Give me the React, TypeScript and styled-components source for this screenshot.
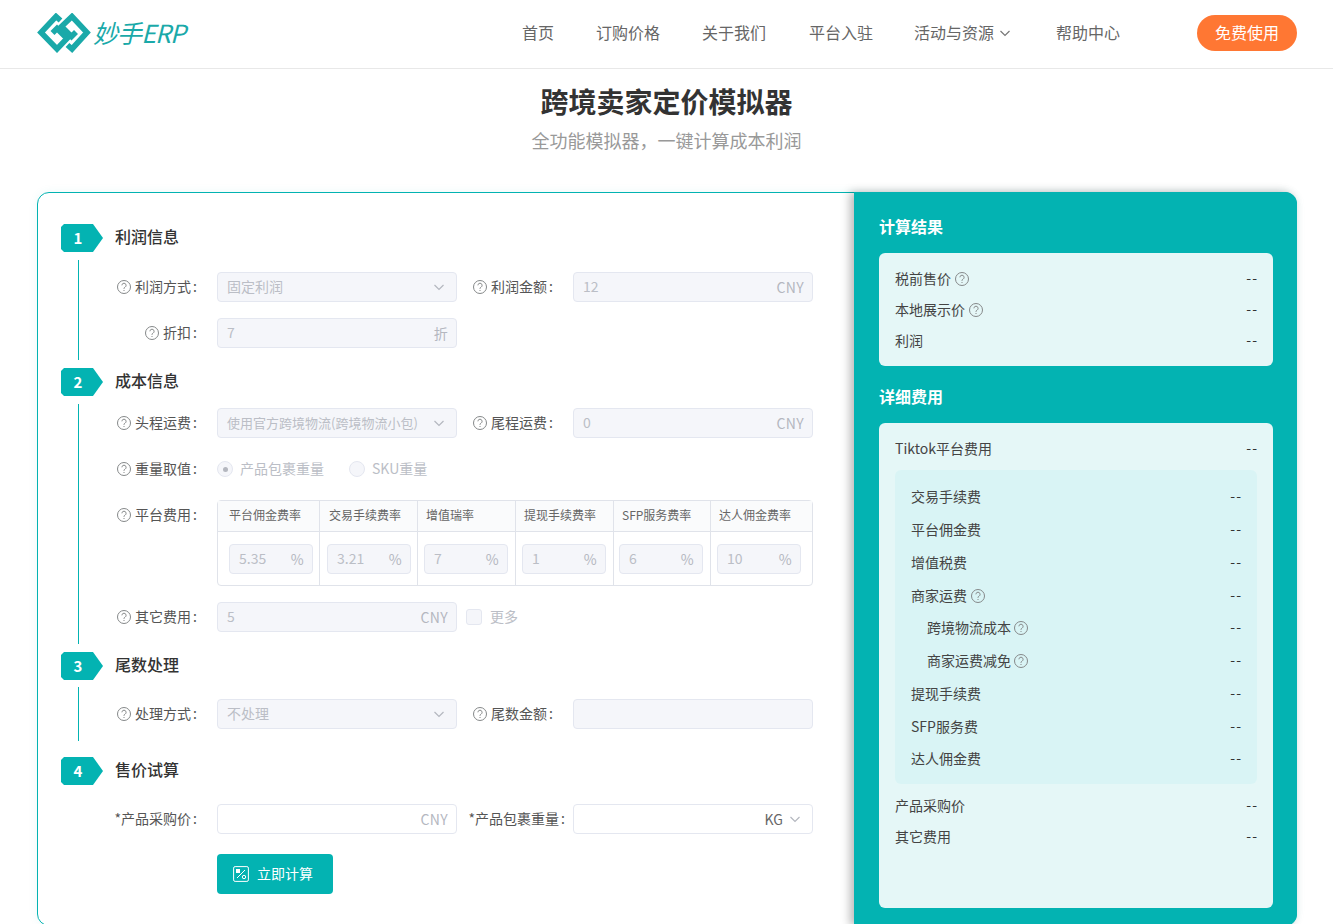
import React from "react";
import styled, { createGlobalStyle } from "styled-components";

const TEAL = "#03b3b2";
const FONT = `"Noto Sans CJK SC", "Noto Sans", sans-serif`;

const Global = createGlobalStyle`
  html, body { margin: 0; padding: 0; background: #fff; overflow: hidden; height: 924px; }
  body { font-family: ${FONT}; font-size: 14px; color: #333; }
  * { box-sizing: border-box; }
`;

const Txt = styled.span`
  display: block;
  padding-bottom: 2px;
`;

const Header = styled.header`
  height: 69px;
  border-bottom: 1px solid #e8e8e8;
  display: flex;
  align-items: center;
  padding: 0 36px 3px 37px;
`;
const LogoWrap = styled.div`
  display: flex;
  align-items: center;
  gap: 2px;
`;
const LogoText = styled.span`
  font-size: 25px;
  font-style: italic;
  font-weight: 400;
  letter-spacing: -0.9px;
  line-height: 38px;
  padding-bottom: 2px;
  color: #1aa9a9;
`;
const Nav = styled.nav`
  margin-left: auto;
  display: flex;
  align-items: center;
`;
const NavItem = styled.a<{ $w: number }>`
  width: ${(p) => p.$w}px;
  display: flex;
  align-items: center;
  gap: 5px;
  font-size: 16px;
  color: #666;
  white-space: nowrap;
`;
const FreeButton = styled.button`
  width: 100px;
  height: 36px;
  border: 0;
  border-radius: 18px;
  background: #ff7733;
  color: #fff;
  font-family: ${FONT};
  font-size: 16px;
  padding: 0 0 2px;
`;

const Hero = styled.div`
  text-align: center;
  height: 123px;
  padding-top: 11px;
`;
const Title = styled.h1`
  margin: 0;
  font-size: 28px;
  line-height: 42px;
  font-weight: 700;
  color: #333;
`;
const Subtitle = styled.p`
  margin: 5px 0 0;
  font-size: 18px;
  line-height: 27px;
  color: #999;
`;

const Board = styled.div`
  margin-left: 37px;
  width: 1260px;
  height: 734px;
  border: 1px solid ${TEAL};
  border-radius: 12px;
  display: flex;
  box-shadow: 0 0 10px rgba(3, 179, 178, 0.08);
`;
const FormPanel = styled.div`
  width: 816px;
  flex: none;
  padding: 31px 0 0 23px;
`;
const ResultPanel = styled.aside`
  flex: 1;
  margin: -1px -1px -1px 0;
  background: ${TEAL};
  border-radius: 0 12px 12px 0;
  padding: 21px 24px 0 25px;
  box-shadow: -4px 0 10px rgba(0, 0, 0, 0.28);
`;

const SectionHead = styled.div`
  display: flex;
  align-items: center;
  height: 28px;
  gap: 12px;
`;
const Badge = styled.div`
  width: 42px;
  height: 28px;
  background: ${TEAL};
  color: #fff;
  font-size: 15px;
  font-weight: 700;
  display: flex;
  align-items: center;
  justify-content: center;
  padding: 0 8px 1px 0;
  clip-path: polygon(3px 0, 32px 0, 42px 14px, 32px 28px, 3px 28px, 0 25px, 0 3px);
`;
const SectionTitle = styled.h2`
  margin: 0;
  padding-bottom: 4px;
  font-size: 16px;
  font-weight: 500;
  color: #333;
`;
const SectionBody = styled.div<{ $line?: boolean; $top: number; $pt: number; $after: number; $pb: number; $gap?: number }>`
  margin: ${(p) => p.$top}px 0 ${(p) => p.$after}px 17px;
  padding: ${(p) => p.$pt}px 0 ${(p) => p.$pb}px 0;
  border-left: 1px solid ${(p) => (p.$line ? TEAL : "transparent")};
  display: flex;
  flex-direction: column;
  gap: ${(p) => p.$gap ?? 16}px;
`;
const Row = styled.div`
  display: flex;
  align-items: flex-start;
`;
const Label = styled.div<{ $w: number; $pr?: number; $ml?: number; $mr: number }>`
  width: ${(p) => p.$w}px;
  margin-left: ${(p) => p.$ml ?? 0}px;
  margin-right: ${(p) => p.$mr}px;
  padding-right: ${(p) => p.$pr ?? 0}px;
  height: 30px;
  flex: none;
  display: flex;
  align-items: center;
  justify-content: flex-end;
  gap: 4px;
  color: #555;
  font-size: 14px;
  white-space: nowrap;
`;
const Colon = styled.span`
  margin-left: 2px;
`;
const Box = styled.div<{ $off?: boolean; $w?: number; $sm?: boolean }>`
  width: ${(p) => p.$w ?? 240}px;
  height: 30px;
  flex: none;
  border: 1px solid #e4e7f0;
  border-radius: 4px;
  background: ${(p) => (p.$off ? "#f5f6fa" : "#fff")};
  display: flex;
  align-items: center;
  justify-content: space-between;
  padding: 0 8px 0 9px;
  font-size: ${(p) => (p.$sm ? 13 : 14)}px;
  color: #bbbec6;
  white-space: nowrap;
`;
const Suffix = styled.span`
  display: block;
  color: #b4b7bf;
  letter-spacing: 0.3px;
`;
const SelectTail = styled.span`
  display: flex;
  align-items: center;
  gap: 6px;
  margin-right: 3px;
  color: #666;
`;
const Chevron = styled.svg<{ $color?: string }>`
  width: 12px;
  height: 12px;
  flex: none;
  fill: none;
  stroke: ${(p) => p.$color ?? "#b4b7bf"};
  stroke-width: 1.2;
`;
const RadioGroup = styled.div`
  height: 30px;
  display: flex;
  align-items: center;
  color: #bbbec6;
`;
const RadioItem = styled.div<{ $w: number }>`
  width: ${(p) => p.$w}px;
  display: flex;
  align-items: center;
  gap: 7px;
`;
const RadioDot = styled.span<{ $on?: boolean }>`
  width: 16px;
  height: 16px;
  border-radius: 50%;
  border: 1px solid #e4e7f0;
  background: #f5f6fa;
  display: flex;
  align-items: center;
  justify-content: center;
  &::after {
    content: "";
    width: 5px;
    height: 5px;
    border-radius: 50%;
    background: ${(p) => (p.$on ? "#b4b7bf" : "transparent")};
  }
`;
const CheckWrap = styled.div`
  height: 30px;
  margin-left: 9px;
  display: flex;
  align-items: center;
  gap: 8px;
  color: #bbbec6;
`;
const CheckBox = styled.span`
  width: 16px;
  height: 16px;
  border: 1px solid #e4e7f0;
  border-radius: 3px;
  background: #f5f6fa;
`;
const RateTable = styled.div`
  width: 596px;
  height: 86px;
  flex: none;
  border: 1px solid #e0e3ea;
  border-radius: 4px;
  display: grid;
  grid-template-columns: 102px 98px 98px 98px 97px 1fr;
  grid-template-rows: 31px 1fr;
`;
const RateHead = styled.div<{ $pl: number; $last?: boolean }>`
  background: #fafbfc;
  border-bottom: 1px solid #e0e3ea;
  border-right: ${(p) => (p.$last ? "0" : "1px solid #e0e3ea")};
  padding-left: ${(p) => p.$pl}px;
  font-size: 12px;
  line-height: 27px;
  color: #666;
  white-space: nowrap;
`;
const RateCell = styled.div<{ $pl: number; $last?: boolean }>`
  border-right: ${(p) => (p.$last ? "0" : "1px solid #e0e3ea")};
  padding: 12px 0 0 ${(p) => p.$pl}px;
`;
const CalcButton = styled.button`
  margin-left: 138px;
  width: 116px;
  height: 40px;
  border: 0;
  border-radius: 4px;
  background: ${TEAL};
  color: #fff;
  font-family: ${FONT};
  font-size: 14px;
  display: flex;
  align-items: center;
  justify-content: center;
  gap: 8px;
  padding: 0 4px 0 0;
  svg { width: 16px; height: 16px; }
`;

const PanelTitle = styled.h3<{ $mt?: number }>`
  margin: ${(p) => p.$mt ?? 0}px 0 0;
  height: 26px;
  line-height: 26px;
  font-size: 16px;
  font-weight: 700;
  color: #fff;
`;
const ResultCard = styled.div<{ $h: number }>`
  margin-top: 14px;
  height: ${(p) => p.$h}px;
  background: #e5f7f7;
  border-radius: 6px;
  padding: 10px 16px;
`;
const ResultRow = styled.div<{ $h?: number; $indent?: number }>`
  height: ${(p) => p.$h ?? 31}px;
  padding-left: ${(p) => p.$indent ?? 0}px;
  display: flex;
  align-items: center;
  justify-content: space-between;
  color: #444;
  font-size: 14px;
`;
const RowName = styled.span<{ $gap?: number }>`
  display: flex;
  align-items: center;
  gap: ${(p) => p.$gap ?? 4}px;
  white-space: nowrap;
`;
const Dash = styled.span`
  display: block;
  padding-bottom: 4px;
  color: #333;
  letter-spacing: 1px;
  margin-right: -1px;
`;
const Inner = styled.div`
  margin: 6px 0;
  height: 314px;
  background: #d9f4f5;
  border-radius: 6px;
  padding: 11px 16px 8px;
`;
const HelpSvg = styled.svg`
  width: 14px;
  height: 14px;
  flex: none;
  fill: none;
  stroke: #858889;
`;

const Help = () => (
  <HelpSvg viewBox="0 0 14 14">
    <circle cx="7" cy="7" r="6.500" strokeWidth="1" />
    <path d="M4.900 5.300a2.100 2.100 0 1 1 3.200 1.800c-.7.4-1.100.8-1.100 1.500v.3" strokeWidth="1" />
    <path d="M7 10v1" strokeWidth="1" />
  </HelpSvg>
);

const Down = ({ color }: { color?: string }) => (
  <Chevron viewBox="0 0 12 12" $color={color}>
    <path d="M1.500 4l4.500 4.500L10.500 4" />
  </Chevron>
);

const Logo = () => (
  <svg width="54" height="40" viewBox="0 0 54 40" fill="none" stroke="#1aa9a9" strokeWidth="5.600" strokeLinejoin="miter">
    <polyline points="23.500,7.500 19,3.500 4,19.500 20,36 30,25.500 20,15.500 15.500,20" />
    <polyline points="30.500,32 35,36 50,19.500 35,3.500 24.500,13.500 34.500,23.500 39,19" />
  </svg>
);

const CalcIcon = () => (
  <svg viewBox="0 0 16 16" fill="none" stroke="#fff">
    <rect x="0.600" y="0.600" width="14.800" height="14.800" rx="1.500" strokeWidth="1" />
    <path d="M4 12L12 4" strokeWidth="1" />
    <rect x="3" y="3" width="4" height="4" fill="#fff" stroke="none" />
    <circle cx="11" cy="11" r="1.700" strokeWidth="1" />
  </svg>
);

const FieldLabel = ({ text, help = true, second }: { text: string; help?: boolean; second?: boolean }) =>
  second ? (
    <Label $w={96} $ml={12} $pr={help ? 12 : 0} $mr={8}>
      {help && <Help />}
      <Txt>{text}<Colon>:</Colon></Txt>
    </Label>
  ) : (
    <Label $w={118} $mr={20}>
      {help && <Help />}
      <Txt>{text}<Colon>:</Colon></Txt>
    </Label>
  );

const navItems: [string, number][] = [
  ["首页", 74],
  ["订购价格", 106],
  ["关于我们", 107],
  ["平台入驻", 105],
];

const rates = [
  ["平台佣金费率", "5.35", 11, 11],
  ["交易手续费率", "3.21", 7, 9],
  ["增值瑞率", "7", 6, 8],
  ["提现手续费率", "1", 6, 8],
  ["SFP服务费率", "6", 5, 8],
  ["达人佣金费率", "10", 6, 8],
] as const;

const subRows: { name: string; help?: boolean; indent?: number }[] = [
  { name: "交易手续费" },
  { name: "平台佣金费" },
  { name: "增值税费" },
  { name: "商家运费", help: true },
  { name: "跨境物流成本", help: true, indent: 16 },
  { name: "商家运费减免", help: true, indent: 16 },
  { name: "提现手续费" },
  { name: "SFP服务费" },
  { name: "达人佣金费" },
];

export default function App() {
  return (
    <>
      <Global />
      <Header>
        <LogoWrap>
          <Logo />
          <LogoText>妙手ERP</LogoText>
        </LogoWrap>
        <Nav>
          {navItems.map(([t, w]) => (
            <NavItem key={t} $w={w}><Txt>{t}</Txt></NavItem>
          ))}
          <NavItem $w={142}>
            <Txt>活动与资源</Txt>
            <Down color="#777" />
          </NavItem>
          <NavItem $w={141}><Txt>帮助中心</Txt></NavItem>
          <FreeButton>免费使用</FreeButton>
        </Nav>
      </Header>
      <Hero>
        <Title>跨境卖家定价模拟器</Title>
        <Subtitle>全功能模拟器，一键计算成本利润</Subtitle>
      </Hero>
      <Board>
        <FormPanel>
          <SectionHead>
            <Badge>1</Badge>
            <SectionTitle>利润信息</SectionTitle>
          </SectionHead>
          <SectionBody $line $top={8} $pt={12} $pb={12} $after={8}>
            <Row>
              <FieldLabel text="利润方式" />
              <Box $off><Txt>固定利润</Txt><SelectTail><Down /></SelectTail></Box>
              <FieldLabel text="利润金额" second />
              <Box $off><Txt>12</Txt><Suffix>CNY</Suffix></Box>
            </Row>
            <Row>
              <FieldLabel text="折扣" />
              <Box $off><Txt>7</Txt><Suffix>折</Suffix></Box>
            </Row>
          </SectionBody>

          <SectionHead>
            <Badge>2</Badge>
            <SectionTitle>成本信息</SectionTitle>
          </SectionHead>
          <SectionBody $line $top={8} $pt={4} $pb={12} $after={8}>
            <Row>
              <FieldLabel text="头程运费" />
              <Box $off $sm><Txt>使用官方跨境物流(跨境物流小包)</Txt><SelectTail><Down /></SelectTail></Box>
              <FieldLabel text="尾程运费" second />
              <Box $off><Txt>0</Txt><Suffix>CNY</Suffix></Box>
            </Row>
            <Row>
              <FieldLabel text="重量取值" />
              <RadioGroup>
                <RadioItem $w={132}><RadioDot $on /><Txt>产品包裹重量</Txt></RadioItem>
                <RadioItem $w={100}><RadioDot /><Txt>SKU重量</Txt></RadioItem>
              </RadioGroup>
            </Row>
            <Row>
              <FieldLabel text="平台费用" />
              <RateTable>
                {rates.map(([name, , , hp], i) => (
                  <RateHead key={name} $pl={hp} $last={i === 5}>{name}</RateHead>
                ))}
                {rates.map(([name, val, pl], i) => (
                  <RateCell key={name} $pl={pl} $last={i === 5}>
                    <Box $off $w={84}><Txt>{val}</Txt><Suffix>%</Suffix></Box>
                  </RateCell>
                ))}
              </RateTable>
            </Row>
            <Row>
              <FieldLabel text="其它费用" />
              <Box $off><Txt>5</Txt><Suffix>CNY</Suffix></Box>
              <CheckWrap><CheckBox /><Txt>更多</Txt></CheckWrap>
            </Row>
          </SectionBody>

          <SectionHead>
            <Badge>3</Badge>
            <SectionTitle>尾数处理</SectionTitle>
          </SectionHead>
          <SectionBody $line $top={7} $pt={12} $pb={12} $after={16}>
            <Row>
              <FieldLabel text="处理方式" />
              <Box $off><Txt>不处理</Txt><SelectTail><Down /></SelectTail></Box>
              <FieldLabel text="尾数金额" second />
              <Box $off />
            </Row>
          </SectionBody>

          <SectionHead>
            <Badge>4</Badge>
            <SectionTitle>售价试算</SectionTitle>
          </SectionHead>
          <SectionBody $top={8} $pt={11} $pb={0} $after={0} $gap={20}>
            <Row>
              <FieldLabel text="*产品采购价" help={false} />
              <Box><span /><Suffix>CNY</Suffix></Box>
              <FieldLabel text="*产品包裹重量" help={false} second />
              <Box><span /><SelectTail>KG<Down /></SelectTail></Box>
            </Row>
            <Row>
              <CalcButton><CalcIcon /><Txt>立即计算</Txt></CalcButton>
            </Row>
          </SectionBody>
        </FormPanel>

        <ResultPanel>
          <PanelTitle>计算结果</PanelTitle>
          <ResultCard $h={113}>
            <ResultRow><RowName><Txt>税前售价</Txt><Help /></RowName><Dash>--</Dash></ResultRow>
            <ResultRow><RowName><Txt>本地展示价</Txt><Help /></RowName><Dash>--</Dash></ResultRow>
            <ResultRow><RowName><Txt>利润</Txt></RowName><Dash>--</Dash></ResultRow>
          </ResultCard>
          <PanelTitle $mt={17}>详细费用</PanelTitle>
          <ResultCard $h={485}>
            <ResultRow><RowName><Txt>Tiktok平台费用</Txt></RowName><Dash>--</Dash></ResultRow>
            <Inner>
              {subRows.map((r) => (
                <ResultRow key={r.name} $h={32.75} $indent={r.indent}>
                  <RowName $gap={r.indent ? 3 : 4}><Txt>{r.name}</Txt>{r.help && <Help />}</RowName>
                  <Dash>--</Dash>
                </ResultRow>
              ))}
            </Inner>
            <ResultRow><RowName><Txt>产品采购价</Txt></RowName><Dash>--</Dash></ResultRow>
            <ResultRow><RowName><Txt>其它费用</Txt></RowName><Dash>--</Dash></ResultRow>
          </ResultCard>
        </ResultPanel>
      </Board>
    </>
  );
}
